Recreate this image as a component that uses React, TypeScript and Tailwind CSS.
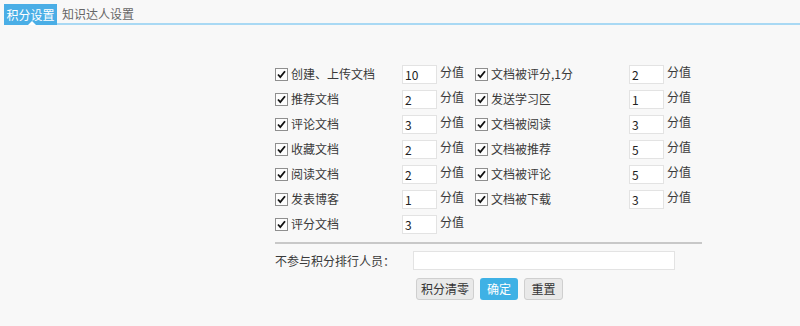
import React from "react";

type Item = { label: string; value: string };

const leftItems: Item[] = [
  { label: "创建、上传文档", value: "10" },
  { label: "推荐文档", value: "2" },
  { label: "评论文档", value: "3" },
  { label: "收藏文档", value: "2" },
  { label: "阅读文档", value: "2" },
  { label: "发表博客", value: "1" },
  { label: "评分文档", value: "3" },
];

const rightItems: Item[] = [
  { label: "文档被评分,1分", value: "2" },
  { label: "发送学习区", value: "1" },
  { label: "文档被阅读", value: "3" },
  { label: "文档被推荐", value: "5" },
  { label: "文档被评论", value: "5" },
  { label: "文档被下载", value: "3" },
];

function Check() {
  return (
    <span className="flex h-[13px] w-[13px] shrink-0 items-center justify-center border border-[#8f8f8f] bg-[#fdfdfd]">
      <svg width="11" height="11" viewBox="0 0 11 11">
        <path d="M2 5.5 L4.3 8 L9 2.2" fill="none" stroke="#111" strokeWidth="1.8" />
      </svg>
    </span>
  );
}

function ScoreCell({ item, labelWidth }: { item: Item; labelWidth: string }) {
  return (
    <div className="flex h-[25px] items-center">
      <div className={`flex items-center gap-[3px] ${labelWidth}`}>
        <Check />
        <span className="-mt-[1px]">{item.label}</span>
      </div>
      <input
        defaultValue={item.value}
        className="h-[19px] w-[35px] border border-[#e3e3e3] bg-white px-[2px] text-[12px] text-[#222] outline-none"
      />
      <span className="ml-[3px] -mt-[5px]">分值</span>
    </div>
  );
}

export default function App() {
  return (
    <div
      className="h-[326px] w-[800px] bg-[#f8f8f8] text-[12px] text-[#3a3a3a]"
      style={{ fontFamily: '"Noto Sans CJK SC", "Liberation Sans", sans-serif' }}
    >
      <div className="flex items-end pl-[4px] pt-[4px]">
        <div className="relative flex h-[21px] w-[53px] items-center justify-center bg-[#4aaee6] text-white">
          积分设置
          <span className="absolute bottom-0 left-[24px] h-0 w-0 border-x-[4px] border-b-[4px] border-x-transparent border-b-white" />
        </div>
        <div className="flex h-[21px] flex-1 items-center border-b-2 border-[#a9d9f4] pl-[5px] text-[#666]">
          知识达人设置
        </div>
      </div>

      <div className="ml-[275px] w-[427px] pt-[37px]">
        <div className="flex">
          <div className="w-[200px]">
            {leftItems.map((it) => (
              <ScoreCell key={it.label} item={it} labelWidth="w-[127px]" />
            ))}
          </div>
          <div>
            {rightItems.map((it) => (
              <ScoreCell key={it.label} item={it} labelWidth="w-[154px]" />
            ))}
          </div>
        </div>

        <div className="mt-[5px] h-[2px] bg-[#c8c8c8]" />

        <div className="mt-[7px] flex h-[19px] items-center">
          <span className="w-[138px]">不参与积分排行人员：</span>
          <input className="h-[19px] w-[262px] border border-[#e3e3e3] bg-white outline-none" />
        </div>

        <div className="mt-[8px] flex gap-[6px] pl-[141px]">
          <button className="h-[22px] w-[58px] rounded-[3px] border border-[#cfcfcf] bg-[#e9e9e9] text-[12px] text-[#333]">
            积分清零
          </button>
          <button className="h-[22px] w-[38px] rounded-[3px] bg-[#3fb1e5] text-[12px] text-white">
            确定
          </button>
          <button className="h-[22px] w-[39px] rounded-[3px] border border-[#cfcfcf] bg-[#e9e9e9] text-[12px] text-[#333]">
            重置
          </button>
        </div>
      </div>
    </div>
  );
}
